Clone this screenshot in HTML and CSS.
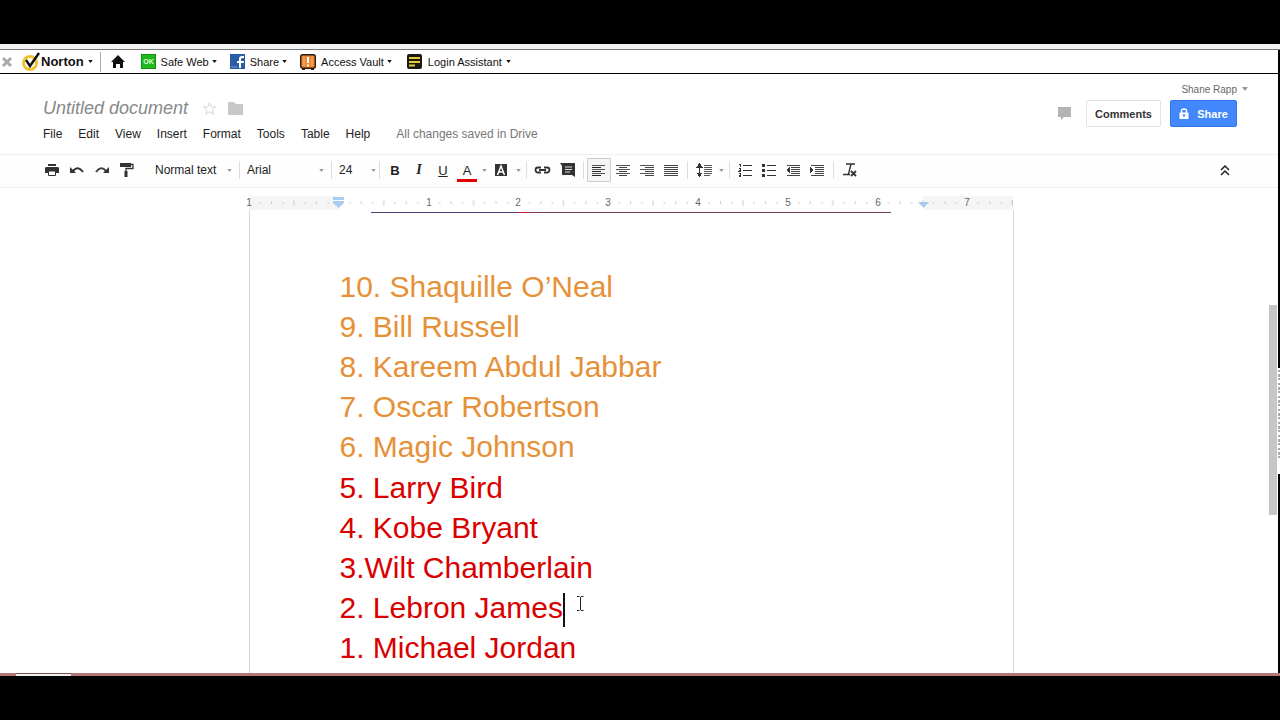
FILE: index.html
```html
<!DOCTYPE html>
<html lang="en">
<head>
<meta charset="utf-8">
<title>Untitled document</title>
<link rel="stylesheet" href="styles.css">
</head>
<body>
<svg class="defs" aria-hidden="true">
  <symbol id="caret" viewBox="0 0 6 4"><path d="M0 0h6L3 4z" fill="currentColor"/></symbol>
</svg>
<div class="screen">
  <nav class="norton" aria-label="Norton toolbar">
    <button class="close" aria-label="Close"><svg width="12" height="12" viewBox="0 0 12 12"><path d="M2 2l8 8M10 2l-8 8" stroke="#aaa" stroke-width="3"/></svg></button>
    <button class="brand"><svg width="18" height="19" viewBox="0 0 18 19"><circle cx="8" cy="11" r="6.5" fill="#fff" stroke="#f2c230" stroke-width="3"/><path d="M4 8l4 6L17 1" fill="none" stroke="#111" stroke-width="2.4"/></svg><b>Norton</b><svg class="tri"><use href="#caret"/></svg></button>
    <span class="rule"></span>
    <button class="home" aria-label="Home"><svg width="14" height="14" viewBox="0 0 14 14"><path d="M7 0l7 7h-2v6H9V9H5v4H2V7H0z" fill="#111"/></svg></button>
    <button class="safe"><svg width="15" height="15" viewBox="0 0 15 15"><rect width="15" height="15" fill="#1fb81f"/><rect x=".5" y=".5" width="14" height="14" fill="none" stroke="#129012"/><text x="7.5" y="10" text-anchor="middle" class="ok">OK</text></svg>Safe Web<svg class="tri"><use href="#caret"/></svg></button>
    <button class="face"><svg width="15" height="15" viewBox="0 0 15 15"><rect width="15" height="15" fill="#2d5ca6"/><path d="M9 14V9H7V7h2V5q0-3 3-3h2v2h-1.500Q11 4 11 5.500V7h3l-.4 2H11v5z" fill="#fff"/><path d="M1 13h6" stroke="#7f9fd0"/></svg>Share<svg class="tri"><use href="#caret"/></svg></button>
    <button class="vault"><svg width="16" height="16" viewBox="0 0 16 16"><path d="M2 13h3v3H2zM11 13h3v3h-3z" fill="#222"/><rect x=".7" y=".7" width="14.600" height="13.600" rx="2" fill="#ee8730" stroke="#2a1a10" stroke-width="1.400"/><path d="M4 3v9M12 3v9" stroke="#f9b574"/><path d="M8 3v6M8 10.500v2" stroke="#fff" stroke-width="2"/></svg>Access Vault<svg class="tri"><use href="#caret"/></svg></button>
    <button class="login"><svg width="15" height="15" viewBox="0 0 15 15"><rect width="15" height="15" rx="2" fill="#1c1a10"/><path d="M2 4h11M2 8h11M2 11.500h6" stroke="#e6cc3c" stroke-width="1.800"/></svg>Login Assistant<svg class="tri"><use href="#caret"/></svg></button>
  </nav>

  <header class="head">
    <div class="left">
      <div class="titlebar">
        <h1>Untitled document</h1>
        <button aria-label="Star"><svg width="15" height="15" viewBox="0 0 15 15"><path d="M7.500 1.500l1.600 4.300 4.500.2-3.500 2.800 1.200 4.400-3.800-2.500-3.800 2.500 1.200-4.400L1.400 6l4.500-.2z" fill="none" stroke="#d6d6d6"/></svg></button>
        <button aria-label="Folder"><svg width="15" height="13" viewBox="0 0 15 13"><path d="M0 0h6l2 2h7v11H0z" fill="#c8c8c8"/></svg></button>
      </div>
      <div class="menus">
        <button>File</button><button>Edit</button><button>View</button><button>Insert</button><button>Format</button><button>Tools</button><button>Table</button><button>Help</button>
        <span class="saved">All changes saved in Drive</span>
      </div>
    </div>
    <div class="right">
      <button class="user">Shane Rapp<svg class="tri"><use href="#caret"/></svg></button>
      <div class="actions">
        <button class="bubble" aria-label="Notifications"><svg width="13" height="13" viewBox="0 0 13 13"><path d="M0 0h13v10H6l-3 3v-3H0z" fill="#b4b4b4"/></svg></button>
        <button class="comments">Comments</button>
        <button class="share"><svg width="10" height="11" viewBox="0 0 10 11"><path d="M2.500 5V3q0-2 2.500-2t2.500 2v2" fill="none" stroke="#fff" stroke-width="1.500"/><path d="M.5 4.500h9V11h-9z" fill="#fff"/><circle cx="5" cy="7.500" r="1.200" fill="#4387fd"/></svg>Share</button>
      </div>
    </div>
  </header>

  <div class="tools" role="toolbar" aria-label="Formatting">
    <div class="group wide">
      <button aria-label="Print"><svg width="14" height="14" viewBox="0 0 14 14"><path d="M3 1h8v2H3zM1 4h12l1 1v5h-3V8H3v2H0V5z" fill="#333"/><path d="M3.500 8h7v4.500h-7z" fill="#fff" stroke="#333"/></svg></button>
      <button aria-label="Undo"><svg width="14" height="12" viewBox="0 0 14 12"><path d="M3 7Q8 1 13 8" fill="none" stroke="#333" stroke-width="2"/><path d="M0 3v6h6z" fill="#333"/></svg></button>
      <button aria-label="Redo"><svg width="14" height="12" viewBox="0 0 14 12"><path d="M1 8Q6 1 11 7" fill="none" stroke="#444" stroke-width="2"/><path d="M14 3v6H8z" fill="#333"/></svg></button>
      <button aria-label="Paint format"><svg width="14" height="16" viewBox="0 0 14 16"><path d="M0 1h11v4H0z" fill="#333"/><path d="M11 2.500h2v4H6V9" fill="none" stroke="#333" stroke-width="1.300"/><path d="M4.500 9h3v6h-3z" fill="#333"/></svg></button>
    </div>
    <label class="pick style"><select aria-label="Style"><option>Normal text</option></select><svg class="tri"><use href="#caret"/></svg></label>
    <span class="sep"></span>
    <label class="pick font"><select aria-label="Font"><option>Arial</option></select><svg class="tri"><use href="#caret"/></svg></label>
    <span class="sep"></span>
    <label class="pick size"><select aria-label="Font size"><option>24</option></select><svg class="tri"><use href="#caret"/></svg></label>
    <span class="sep tight"></span>
    <div class="group">
      <button class="bold">B</button>
      <button class="italic">I</button>
      <button class="under">U</button>
      <button class="color">A</button>
      <svg class="tri"><use href="#caret"/></svg>
      <button aria-label="Highlight color"><svg width="12" height="12" viewBox="0 0 12 12"><path d="M0 0h12v12H0z" fill="#333"/><path d="M2.500 11L6 2l3.500 9M4 8h4" fill="none" stroke="#fff" stroke-width="1.500"/></svg></button>
      <svg class="tri"><use href="#caret"/></svg>
    </div>
    <span class="sep tight"></span>
    <div class="group wide">
      <button aria-label="Link"><svg width="17" height="8" viewBox="0 0 17 8"><path d="M7 6.500H4a2.500 2.500 0 010-5h3M10 1.500h3a2.500 2.500 0 010 5h-3M5 4h7" fill="none" stroke="#333" stroke-width="1.800"/></svg></button>
      <button aria-label="Comment"><svg width="16" height="14" viewBox="0 0 16 14"><path d="M0 0h15v14l-3-2H2V3z" fill="#333"/><path d="M5 4h7M5 6.500h7M5 9h5" stroke="#ddd"/></svg></button>
    </div>
    <span class="sep tight"></span>
    <div class="group crisp">
      <button class="on" aria-label="Left align"><svg width="14" height="12" viewBox="0 0 14 12"><path d="M0 1h13M0 5h13M0 9h13" stroke="#555"/><path d="M0 3h9M0 7h9M0 11h9" stroke="#222"/></svg></button>
      <button aria-label="Center align"><svg width="14" height="12" viewBox="0 0 14 12"><path d="M0 1h14M0 5h14M0 9h14" stroke="#555"/><path d="M3 3h8M3 7h8M3 11h8" stroke="#444"/></svg></button>
      <button aria-label="Right align"><svg width="14" height="12" viewBox="0 0 14 12"><path d="M0 1h14M0 5h14M0 9h14" stroke="#555"/><path d="M5 3h9M5 7h9M5 11h9" stroke="#444"/></svg></button>
      <button aria-label="Justify"><svg width="14" height="12" viewBox="0 0 14 12"><path d="M0 1h14M0 3h14M0 5h14M0 7h14M0 9h14M0 11h14" stroke="#444"/></svg></button>
    </div>
    <span class="sep mid"></span>
    <div class="group crisp">
      <button class="spacing" aria-label="Line spacing"><svg width="16" height="14" viewBox="0 0 16 14"><path d="M3 2h1v10H3z" fill="#333"/><path d="M0 4.500L3.500 0 7 4.500zM0 9.500L3.500 14 7 9.500z" fill="#333"/><path d="M8 2h8M8 4h8M8 6h8M8 8h8M8 10h8M8 12h6" stroke="#555"/></svg></button>
      <svg class="tri"><use href="#caret"/></svg>
    </div>
    <span class="sep tight"></span>
    <div class="group crisp">
      <button aria-label="Numbered list"><svg width="14" height="14" viewBox="0 0 14 14"><path d="M1 1h1v3M.5 5.500h2V7L.8 8.500h2M.5 10.500h2v3h-2M1 12h1.500" fill="none" stroke="#333"/><path d="M5 2.500h9M5 7.500h9M5 12.500h9" stroke="#333"/></svg></button>
      <button aria-label="Bulleted list"><svg width="14" height="14" viewBox="0 0 14 14"><path d="M0 1h3v3H0zM0 6h3v3H0zM0 11h3v3H0z" fill="#333"/><path d="M5 2.500h9M5 7.500h9M5 12.500h9" stroke="#333"/></svg></button>
      <button aria-label="Decrease indent"><svg width="14" height="12" viewBox="0 0 14 12"><path d="M1 1h13M5 3h9M5 5h9M5 7h9M5 9h9M1 11h13" stroke="#444"/><path d="M4 3v6L0 6z" fill="#333"/></svg></button>
      <button aria-label="Increase indent"><svg width="14" height="12" viewBox="0 0 14 12"><path d="M1 1h13M5 3h9M5 5h9M5 7h9M5 9h9M1 11h13" stroke="#444"/><path d="M0 3v6l4-3z" fill="#333"/></svg></button>
    </div>
    <span class="sep mid"></span>
    <button class="clear" aria-label="Clear formatting"><svg width="15" height="14" viewBox="0 0 15 14"><path d="M3 1h9M8 1L5.500 11M0 11.500h7" fill="none" stroke="#333" stroke-width="1.400"/><path d="M8 8l5 5M13 8l-5 5" stroke="#333" stroke-width="1.800"/></svg></button>
    <button class="fold" aria-label="Hide menus"><svg width="10" height="11" viewBox="0 0 10 11"><path d="M1 5l4-4 4 4M1 10l4-4 4 4" fill="none" stroke="#222" stroke-width="1.500"/></svg></button>
  </div>

  <main class="work">
    <div class="ruler">
      <svg width="764" height="14" viewBox="0 0 764 14" role="img" aria-label="Ruler">
        <defs><pattern id="inch" width="89.800" height="14" patternUnits="userSpaceOnUse"><path d="M11 6v2M22.500 5v3M34 6v2M56 6v2M67.500 5v3M79 6v2" stroke="#ccc"/><path d="M45 4v6" stroke="#ccc"/></pattern></defs>
        <path d="M0 0h90v14H0zM674 0h90v14h-90z" fill="#f5f5f5"/>
        <path d="M0 0h764v14H0z" fill="url(#inch)"/>
        <path d="M763.500 4v6" stroke="#ccc"/>
        <path d="M84 1h11v3H84zM84 5h11v2l-5.500 5L84 7z" fill="#a9cdf0"/><path d="M669 6h11l-5.500 6z" fill="#a9c8ee"/>
        <g class="nums"><text x="0" y="10">1</text><text x="180" y="10">1</text><text x="269" y="10">2</text><text x="359" y="10">3</text><text x="449" y="10">4</text><text x="539" y="10">5</text><text x="629" y="10">6</text><text x="718" y="10">7</text></g>
      </svg>
    </div>
    <article class="page">
      <div class="underline"><i></i><i></i><i></i></div>
      <div class="list orange">
        <p>10. Shaquille O’Neal</p>
        <p>9. Bill Russell</p>
        <p>8. Kareem Abdul Jabbar</p>
        <p>7. Oscar Robertson</p>
        <p>6. Magic Johnson</p>
      </div>
      <div class="list red">
        <p>5. Larry Bird</p>
        <p>4. Kobe Bryant</p>
        <p>3.Wilt Chamberlain</p>
        <p>2. Lebron James<span class="cursor"></span><svg class="beam" width="8" height="16" viewBox="0 0 8 16"><path d="M1 .5h2.500M5 .5h2.500M4.500 1v13M1 14.500h2.500M5 14.500h2.500" stroke="#222" fill="none"/></svg></p>
        <p>1. Michael Jordan</p>
      </div>
    </article>
    <div class="thumb"></div>
  </main>
  <div class="edge"><svg width="2" height="106" viewBox="0 0 2 106"><path d="M0 0h2v106H0z" fill="#fff"/><path d="M1 2v90" stroke="#555" stroke-dasharray="2 2 3 1 2 3"/></svg></div>
  <footer class="strip"><span></span></footer>
</div>
</body>
</html>
```
FILE: styles.css
```css
* { box-sizing: border-box; }
body { margin: 0; background: #000; font-family: "Liberation Sans", Arial, sans-serif; color: #222; }
button, select { margin: 0; padding: 0; border: 0; background: none; font: inherit; color: inherit; }
button { display: flex; align-items: center; justify-content: center; flex: none; white-space: nowrap; }
svg { flex: none; display: block; }
.defs { position: absolute; width: 0; height: 0; }
.tri { width: 5px; height: 3px; }

.screen { position: relative; display: flex; flex-direction: column; height: 100vh; padding: 44px 0; overflow: hidden; }

.norton { display: flex; align-items: center; height: 30px; flex: none; padding-top: 6px; background: linear-gradient(#f2f2f2 5px, #777 5px, #777 6px, #fff 6px); border-bottom: 1px solid #000; font-size: 11px; color: #111; }
.close { width: 14px; }
.brand { margin-left: 8px; gap: 1px; }
.brand b { font-size: 13px; margin-right: 5px; }
.rule { width: 1px; height: 20px; margin-left: 7px; background: #aaa; }
.home { margin-left: 10px; }
.safe { margin-left: 16px; gap: 5px; }
.face { margin-left: 13px; gap: 5px; }
.vault { margin-left: 13px; gap: 5px; }
.login { margin-left: 15px; gap: 6px; }
.norton .tri { margin-left: -2px; }
.ok { font-size: 7px; font-weight: bold; fill: #d8ffd8; }

.head { display: flex; justify-content: space-between; height: 80px; flex: none; padding: 8px 32px 0 43px; background: #fff; }
.left { padding-top: 15px; }
.titlebar { display: flex; align-items: center; height: 22px; gap: 11px; }
h1 { margin: 0 3px 0 0; font-size: 18px; font-weight: normal; font-style: italic; color: #888; }
.menus { display: flex; align-items: center; height: 30px; gap: 16px; font-size: 12px; }
.saved { margin-left: 10px; color: #777; white-space: nowrap; }
.right { display: flex; flex-direction: column; align-items: flex-end; gap: 4px; }
.user { height: 14px; gap: 5px; font-size: 10px; color: #666; }
.user .tri { width: 6px; height: 4px; color: #999; }
.actions { display: flex; align-items: center; padding-right: 11px; font-size: 11px; font-weight: bold; }
.bubble { margin-right: 15px; }
.comments { height: 27px; width: 75px; border: 1px solid #e2e2e2; border-radius: 2px; margin-right: 9px; color: #333; }
.share { height: 27px; width: 67px; border: 1px solid #3079ed; border-radius: 2px; background: #4387fd; color: #fff; gap: 8px; }

.tools { display: flex; align-items: center; height: 34px; flex: none; padding: 0 43px 2px 39px; background: #fefefe; border-top: 1px solid #f0f0f0; border-bottom: 1px solid #f0f0f0; font-size: 12px; }
.tools .tri { color: #999; }
.group { display: flex; align-items: center; }
.group .tri { margin: 0 2px 0 3px; }
.crisp path { shape-rendering: crispEdges; }
.tools button { width: 24px; height: 24px; }
.tools .wide button { width: 25px; }
.sep { width: 1px; height: 18px; margin: 0 7px; background: #ddd; flex: none; }
.tools .tight { margin: 0 3px; }
.tools .mid { margin: 0 4px; }
.pick { display: flex; align-items: center; flex: none; }
.pick select { flex: 1; min-width: 0; appearance: none; }
.style { width: 77px; margin-left: 16px; }
.font { width: 77px; }
.size { width: 37px; }
.bold { font-weight: bold; font-size: 13px; }
.italic { font: italic bold 14px "Liberation Serif", serif; }
.under { text-decoration: underline; font-size: 13px; }
.color { font-size: 13px; background: linear-gradient(#e60000, #e60000) center bottom / 20px 3px no-repeat; }
.tools .on { border: 1px solid #ccc; background: #f6f6f6; border-radius: 1px; }
.tools .fold { margin-left: auto; }

.work { position: relative; flex: 1; min-height: 0; overflow: hidden; background: #fff; padding: 8px 18px 0 0; }
.ruler { display: flex; justify-content: center; height: 14px; }
.ruler svg { overflow: visible; }
.nums { font-size: 10px; text-anchor: middle; fill: #666; }
.page { max-width: 765px; min-height: 100%; margin: 0 auto; padding: 2px 90px 0; border: solid #d8d8d8; border-width: 0 1px; }
.underline { display: flex; height: 1px; margin: 0 31px; }
.underline i { background: #75404c; flex: 368; }
.underline i:first-child { background: #45407c; flex: 150; }
.underline i:nth-child(2) { background: #c02838; flex: 13; }
.list { font-size: 30px; line-height: 40px; white-space: nowrap; }
.list p { margin: 0; }
.orange { margin-top: 54px; color: #e69138; }
.red { padding-top: 1px; color: #d90000; }
.cursor { display: inline-block; width: 2px; height: 34px; vertical-align: middle; background: #111; }
.beam { display: inline-block; margin-left: 11px; vertical-align: 6px; }
.thumb { position: absolute; right: 3px; top: 117px; width: 8px; height: 210px; background: #c6c6c6; }
.edge { position: absolute; right: 0; top: 50px; bottom: 47px; width: 2px; background: #000; padding-top: 318px; }
.strip { height: 3px; flex: none; background: #b07878; }
.strip span { display: block; width: 55px; height: 3px; margin-left: 16px; background: #eee; border-top: 1px solid #7c5050; }
```
